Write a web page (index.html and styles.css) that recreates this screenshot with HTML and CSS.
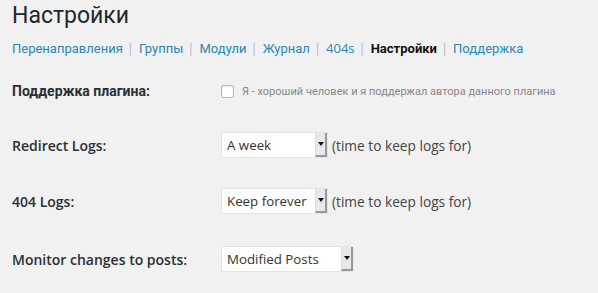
FILE: index.html
```html
<!DOCTYPE html>
<html>
<head>
<meta charset="utf-8">
<link rel="stylesheet" href="styles.css">
</head>
<body>
<div class="wrap">
  <h1 class="title cyr">Настройки</h1>
  <ul class="subnav">
    <li><a href="#" class="cyr">Перенаправления</a><span class="sep">|</span></li>
    <li><a href="#" class="cyr">Группы</a><span class="sep">|</span></li>
    <li><a href="#" class="cyr">Модули</a><span class="sep">|</span></li>
    <li><a href="#" class="cyr">Журнал</a><span class="sep">|</span></li>
    <li><a href="#">404s</a><span class="sep">|</span></li>
    <li><a href="#" class="current cyr">Настройки</a><span class="sep">|</span></li>
    <li><a href="#" class="cyr">Поддержка</a></li>
  </ul>
  <div class="form">
    <div class="row r1">
      <div class="label cyr">Поддержка плагина:</div>
      <div class="field">
        <span class="checkbox"></span>
        <span class="small cyr">Я - хороший человек и я поддержал автора данного плагина</span>
      </div>
    </div>
    <div class="row r2">
      <div class="label">Redirect Logs:</div>
      <div class="field">
        <div class="select"><span class="value">A week</span><span class="arrow"></span></div>
        <span class="hint">(time to keep logs for)</span>
      </div>
    </div>
    <div class="row r3">
      <div class="label">404 Logs:</div>
      <div class="field">
        <div class="select"><span class="value">Keep forever</span><span class="arrow"></span></div>
        <span class="hint">(time to keep logs for)</span>
      </div>
    </div>
    <div class="row r4">
      <div class="label">Monitor changes to posts:</div>
      <div class="field">
        <div class="select wide"><span class="value">Modified Posts</span><span class="arrow"></span></div>
      </div>
    </div>
  </div>
</div>
</body>
</html>
```
FILE: styles.css
```css
* { box-sizing: border-box; }
html, body { margin: 0; padding: 0; }
body {
  background: #f1f1f1;
  font-family: "Open Sans", "Liberation Sans", sans-serif;
  color: #444;
  width: 598px;
  height: 293px;
  overflow: hidden;
}
.cyr { font-family: Roboto, "Liberation Sans", sans-serif; }
.wrap { padding: 0 12px; }
.title {
  margin: 0;
  font-size: 23px;
  font-weight: 400;
  line-height: 32px;
  color: #23282d;
}
.subnav {
  list-style: none;
  margin: 7px 0 0;
  padding: 0;
  display: flex;
  font-size: 13px;
  line-height: 18px;
}
.subnav a { color: #2a86b5; text-decoration: none; }
.subnav a.current { color: #111; font-weight: 700; }
.sep { color: #b5b5b5; padding: 0 5px 0 4px; font-family: "Open Sans", sans-serif; }
.form { margin-top: 6px; }
.row { display: flex; align-items: center; }
.r1 { height: 54px; }
.r2 { height: 54px; }
.r3 { height: 58px; }
.r4 { height: 58px; }
.label {
  width: 209px;
  font-size: 14px;
  font-weight: 600;
  color: #2b2f33;
}
.label.cyr { font-weight: 700; font-size: 14px; }
.field { display: flex; align-items: center; }
.checkbox {
  width: 13px; height: 13px;
  border: 1px solid #b4b9be;
  border-radius: 2px;
  background: #fff;
  box-shadow: inset 0 1px 2px rgba(0,0,0,0.1);
  margin-right: 8px;
}
.small { font-size: 11px; color: #888; }
.select {
  display: flex;
  width: 107px;
  height: 26px;
  background: #fff;
  border: 1px solid #e4e4e4;
  align-items: stretch;
}
.select.wide { width: 133px; }
.value {
  flex: 1;
  font-size: 13.3px;
  color: #333;
  line-height: 24px;
  padding-left: 5px;
}
.arrow {
  width: 12px;
  background: #e8e8e8;
  border-left: 1px solid #ddd;
  border-right: 2px solid #999;
  border-bottom: 2px solid #999;
  position: relative;
}
.arrow::after {
  content: "";
  position: absolute;
  left: 2px; top: 9px;
  border-left: 3px solid transparent;
  border-right: 3px solid transparent;
  border-top: 4px solid #111;
}
.hint { font-size: 13.7px; color: #444; margin-left: 4px; }
```
